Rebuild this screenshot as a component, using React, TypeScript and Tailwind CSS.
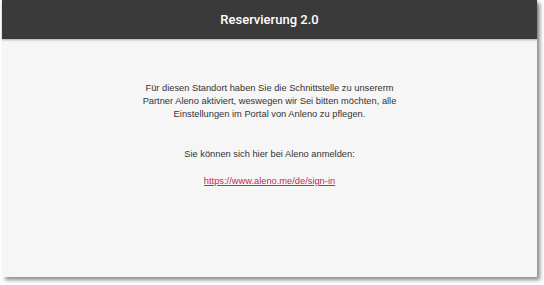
export default function App() {
  return (
    <div className="w-[544px] h-[285px] bg-white pl-[2px] pr-[7px] pb-[8px]" style={{ fontFamily: '"Liberation Sans", Arial, sans-serif' }}>
      <div className="h-full flex flex-col bg-[#f6f6f6] shadow-[3px_3px_4px_rgba(0,0,0,0.45)]">
        <div className="h-[39px] shrink-0 bg-[#3b3a3a] flex items-center justify-center shadow-[0_1px_2px_rgba(0,0,0,0.3)]">
          <span className="text-white text-[13px] font-medium" style={{ fontFamily: 'Roboto, sans-serif' }}>Reservierung 2.0</span>
        </div>
        <div className="flex flex-col items-center text-center text-[#333] text-[9.3px] leading-[13px] pt-[43px]">
          <p>Für diesen Standort haben Sie die Schnittstelle zu unsererm<br />Partner Aleno aktiviert, weswegen wir Sei bitten möchten, alle<br />Einstellungen im Portal von Anleno zu pflegen.</p>
          <p className="mt-[27px]">Sie können sich hier bei Aleno anmelden:</p>
          <a className="mt-[14px] text-[#c8294f] underline" href="#">https://www.aleno.me/de/sign-in</a>
        </div>
      </div>
    </div>
  );
}
